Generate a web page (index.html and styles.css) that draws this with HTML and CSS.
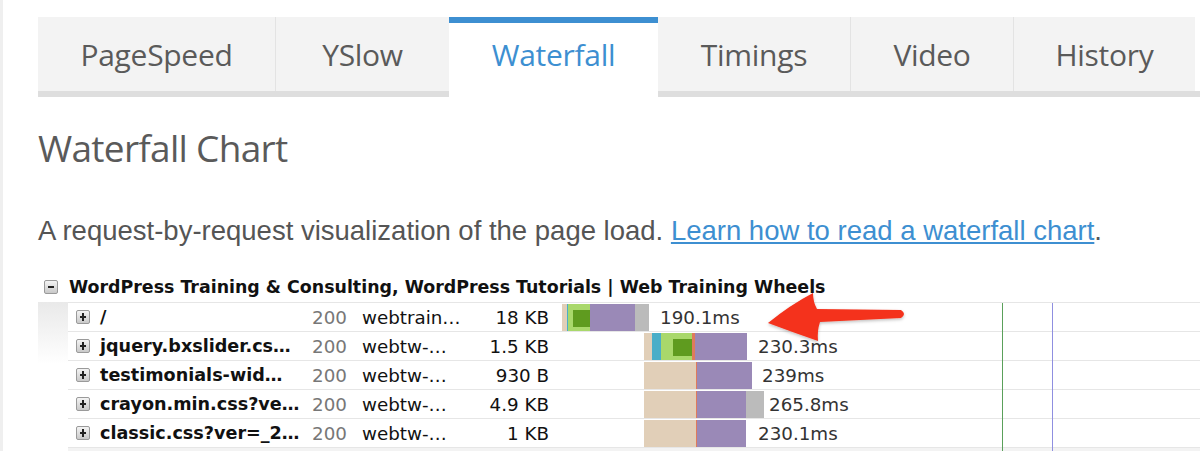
FILE: index.html
```html
<!DOCTYPE html>
<html>
<head>
<meta charset="utf-8">
<link rel="stylesheet" href="styles.css">
</head>
<body>
<div class="page">
  <ul class="tabs">
    <li class="tab t1">PageSpeed</li>
    <li class="tab t2">YSlow</li>
    <li class="tab t3 active">Waterfall</li>
    <li class="tab t4">Timings</li>
    <li class="tab t5">Video</li>
    <li class="tab t6">History</li>
  </ul>

  <h1 class="title">Waterfall Chart</h1>
  <p class="intro">A request-by-request visualization of the page load. <a href="#" class="link">Learn how to read a waterfall chart</a>.</p>

  <div class="wf">
    <div class="wf-head">
      <span class="toggle minus"></span>
      <span class="wf-title">WordPress Training &amp; Consulting, WordPress Tutorials | Web Training Wheels</span>
    </div>
    <div class="wf-body">
      <div class="rows">
        <div class="row">
          <span class="toggle plus"></span>
          <span class="name">/</span>
          <span class="status">200</span>
          <span class="host">webtrain…</span>
          <span class="size">18 KB</span>
          <div class="tl">
            <span class="seg beige" style="margin-left:7px;width:5px"></span>
            <span class="seg blue" style="width:1px"></span>
            <span class="seg lgreen" style="width:22px"><span class="dgreen" style="margin-left:5px"></span></span>
            <span class="seg purple" style="width:45px"></span>
            <span class="seg gray" style="width:14px"></span>
            <span class="ms" style="margin-left:11px">190.1ms</span>
          </div>
        </div>
        <div class="row">
          <span class="toggle plus"></span>
          <span class="name">jquery.bxslider.cs…</span>
          <span class="status">200</span>
          <span class="host">webtw-…</span>
          <span class="size">1.5 KB</span>
          <div class="tl">
            <span class="seg beige" style="margin-left:89px;width:8px"></span>
            <span class="seg blue" style="width:9px"></span>
            <span class="seg lgreen" style="width:31px"><span class="dgreen" style="margin-left:12px"></span></span>
            <span class="seg orange" style="width:3px"></span>
            <span class="seg purple" style="width:52px"></span>
            <span class="ms" style="margin-left:11px">230.3ms</span>
          </div>
        </div>
        <div class="row">
          <span class="toggle plus"></span>
          <span class="name">testimonials-wid…</span>
          <span class="status">200</span>
          <span class="host">webtw-…</span>
          <span class="size">930 B</span>
          <div class="tl">
            <span class="seg beige" style="margin-left:89px;width:52px"></span>
            <span class="seg orange" style="width:1px"></span>
            <span class="seg purple" style="width:55px"></span>
            <span class="ms" style="margin-left:10px">239ms</span>
          </div>
        </div>
        <div class="row">
          <span class="toggle plus"></span>
          <span class="name">crayon.min.css?ve…</span>
          <span class="status">200</span>
          <span class="host">webtw-…</span>
          <span class="size">4.9 KB</span>
          <div class="tl">
            <span class="seg beige" style="margin-left:89px;width:52px"></span>
            <span class="seg orange" style="width:1px"></span>
            <span class="seg purple" style="width:49px"></span>
            <span class="seg gray" style="width:18px"></span>
            <span class="ms" style="margin-left:5px">265.8ms</span>
          </div>
        </div>
        <div class="row">
          <span class="toggle plus"></span>
          <span class="name">classic.css?ver=_2…</span>
          <span class="status">200</span>
          <span class="host">webtw-…</span>
          <span class="size">1 KB</span>
          <div class="tl">
            <span class="seg beige" style="margin-left:89px;width:52px"></span>
            <span class="seg orange" style="width:1px"></span>
            <span class="seg purple" style="width:49px"></span>
            <span class="ms" style="margin-left:12px">230.1ms</span>
          </div>
        </div>
        <div class="row last"></div>
        <span class="vline onload"></span>
        <span class="vline done"></span>
      </div>
    </div>
    <svg class="arrow" width="160" height="70" viewBox="0 0 160 70">
      <defs>
        <filter id="sh" x="-10%" y="-20%" width="130%" height="150%">
          <feDropShadow dx="0" dy="1.5" stdDeviation="1.5" flood-color="#000" flood-opacity="0.25"/>
        </filter>
      </defs>
      <path filter="url(#sh)" fill="#f4321c" d="M8 36 Q30 18 53 6 Q53 15 57 22 L141 23 Q147 27 141 31 L60 35 Q57 44 58 54 Q32 45 8 36 Z"/>
    </svg>
  </div>
</div>
</body>
</html>
```

FILE: styles.css
```css
html, body {
  margin: 0;
  padding: 0;
  background: #fff;
}
body {
  width: 1200px;
  height: 451px;
  overflow: hidden;
}
.page {
  border-left: 3px solid #efefef;
  height: 451px;
  box-sizing: border-box;
  padding-left: 35px;
  padding-top: 17px;
  overflow: hidden;
}

/* tabs */
.tabs {
  list-style: none;
  margin: 0;
  padding: 0;
  display: flex;
  width: 1200px;
  height: 74px;
  border-bottom: 6px solid #dedede;
}
.tab {
  box-sizing: border-box;
  height: 74px;
  background: #f3f3f3;
  border-left: 1px solid #e3e3e3;
  display: flex;
  align-items: center;
  justify-content: center;
  font-family: "Open Sans", "DejaVu Sans", sans-serif;
  font-size: 30px;
  color: #5a5a5a;
  letter-spacing: -0.3px;
}
.tab.t1 { width: 237px; border-left: none; }
.tab.t2 { width: 174px; }
.tab.t3 { width: 209px; }
.tab.t4 { width: 192px; border-left: none; }
.tab.t5 { width: 163px; }
.tab.t6 { width: 182px; }
.tab.active {
  background: #fff;
  border-left: none;
  border-top: 6px solid #3d8fd1;
  height: 80px;
  margin-bottom: -6px;
  padding-bottom: 12px;
  color: #3d8fd1;
}

/* heading */
.title {
  margin: 27px 0 0;
  font-family: "Open Sans", "DejaVu Sans", sans-serif;
  font-weight: 400;
  font-size: 37px;
  line-height: 48px;
  color: #5a5a5a;
  letter-spacing: -0.7px;
}
.intro {
  margin: 44px 0 0;
  font-family: "Liberation Sans", Arial, sans-serif;
  font-size: 27.5px;
  line-height: 30px;
  color: #555;
}
.link {
  color: #3d8fd1;
  text-decoration: underline;
}

/* waterfall */
.wf {
  position: relative;
  margin-top: 26px;
  font-family: "DejaVu Sans", Verdana, sans-serif;
  font-size: 18.3px;
  color: #111;
}
.wf-head {
  display: flex;
  align-items: center;
  height: 30px;
  padding-left: 6px;
}
.wf-title {
  font-weight: bold;
  margin-left: 11px;
  font-size: 17.4px;
}
.toggle {
  box-sizing: border-box;
  width: 14px;
  height: 14px;
  border: 1px solid #9a9a9a;
  border-radius: 2px;
  background: linear-gradient(#f4f4f4, #c9c9c9);
  position: relative;
  flex: none;
}
.toggle::before,
.toggle.plus::after {
  content: "";
  position: absolute;
  background: #222;
}
.toggle::before {
  left: 3px;
  right: 3px;
  top: 5px;
  height: 2px;
}
.toggle.plus::after {
  top: 2px;
  bottom: 2px;
  left: 5px;
  width: 2px;
}
.wf-body {
  padding-left: 30px;
  background: linear-gradient(#e9e9e9, #fff) no-repeat 0 0 / 30px 62px;
}
.rows {
  position: relative;
  border-top: 1px solid #e6e6e6;
}
.row {
  display: flex;
  align-items: center;
  height: 28px;
  border-bottom: 1px solid #e6e6e6;
  white-space: nowrap;
}
.row.last {
  height: 3px;
  border-bottom: none;
  background: #f3f3f3;
}
.row .toggle {
  margin-left: 8px;
}
.name {
  width: 209px;
  margin-left: 10px;
  font-weight: bold;
  font-size: 17.6px;
}
.status {
  width: 38px;
  text-align: right;
  color: #777;
}
.host {
  width: 110px;
  margin-left: 15px;
}
.size {
  width: 77px;
  text-align: right;
}
.tl {
  display: flex;
  align-items: stretch;
  height: 28px;
  margin-left: 6px;
}
.seg {
  display: block;
  height: 27px;
  margin-top: 1px;
}
.beige { background: #e1cfb8; }
.blue { background: #4aaec8; }
.lgreen { background: #a9d86b; display: flex; }
.dgreen {
  display: block;
  flex: 1;
  background: #5f9b1f;
  margin-top: 6px;
  margin-bottom: 4px;
}
.orange { background: #df7b5c; }
.purple { background: #9a89b7; }
.gray { background: #bbbbbb; }
.ms {
  align-self: center;
  color: #333;
}
.vline {
  position: absolute;
  top: 0;
  bottom: 0;
  width: 1px;
}
.vline.onload { left: 934px; background: #5aa05a; }
.vline.done { left: 984px; background: #8f8fe0; }

.arrow {
  position: absolute;
  left: 722px;
  top: 15px;
}
```
